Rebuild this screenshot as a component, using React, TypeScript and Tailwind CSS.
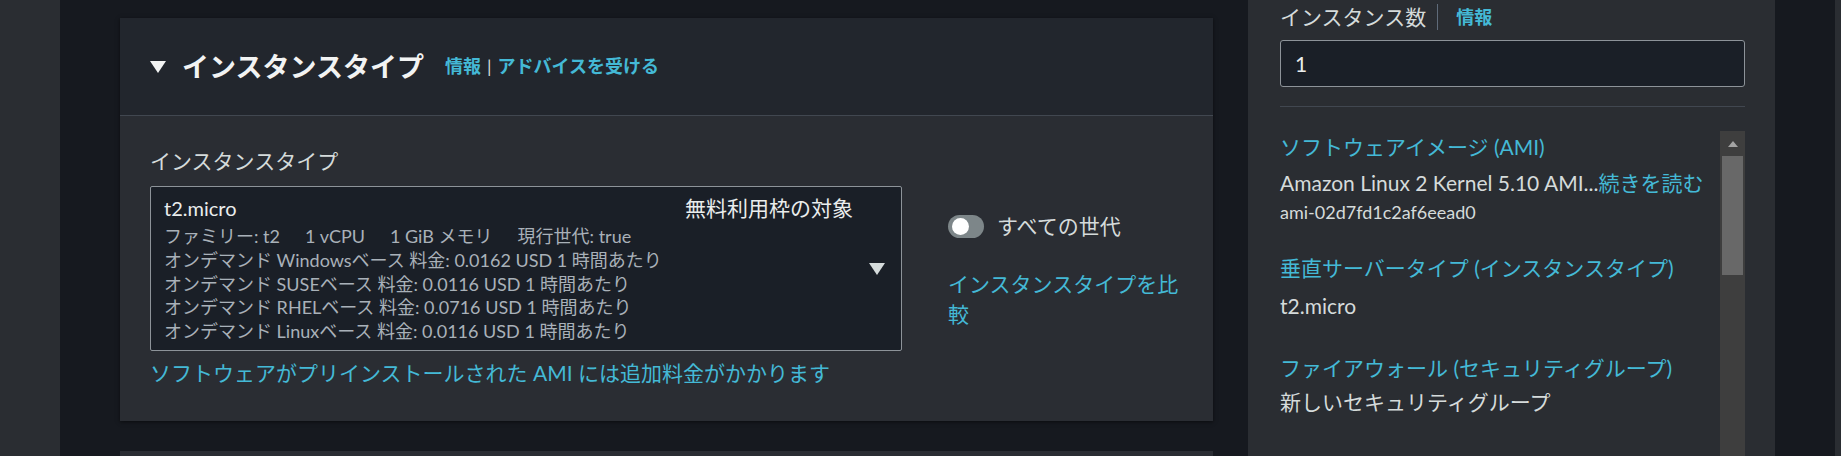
import React from 'react';

const font = "font-['Lato','Noto_Sans_CJK_JP',sans-serif]";

const Caret: React.FC<{ className?: string }> = ({ className }) => (
  <svg viewBox="0 0 16 12" className={className}>
    <polygon points="0,0 16,0 8,12" fill="currentColor" />
  </svg>
);

const specs = ['ファミリー: t2', '1 vCPU', '1 GiB メモリ', '現行世代: true'];

const priceLines = [
  'オンデマンド Windowsベース 料金: 0.0162 USD 1 時間あたり',
  'オンデマンド SUSEベース 料金: 0.0116 USD 1 時間あたり',
  'オンデマンド RHELベース 料金: 0.0716 USD 1 時間あたり',
  'オンデマンド Linuxベース 料金: 0.0116 USD 1 時間あたり',
];

const InstanceTypeCard: React.FC = () => (
  <div className="w-[1093px] bg-[#2a2d33] shadow-[0_1px_4px_rgba(0,0,0,0.55)]">
    <div className="h-[98px] bg-[#22262d] border-b border-[#414750] flex items-center pl-[30px]">
      <Caret className="w-[16px] h-[12px] text-[#f2f3f3]" />
      <h2 className="ml-[16px] text-[27px] leading-[34px] font-bold text-[#f2f3f3]">インスタンスタイプ</h2>
      <div className="ml-[21px] flex items-center text-[18px] font-bold text-[#44b9d6]">
        <span>情報</span>
        <span className="mx-[6px] font-normal text-[#d5dbdb]">|</span>
        <span>アドバイスを受ける</span>
      </div>
    </div>
    <div className="flex px-[30px] pt-[31px] pb-[34px]">
      <div className="w-[752px]">
        <div className="text-[21px] leading-[28px] text-[#d5dbdb]">インスタンスタイプ</div>
        <div className="mt-[11px] h-[165px] bg-[#1a1f27] border border-[#8d9399] rounded-[2px] flex">
          <div className="flex-1 pl-[13px] pt-[7px]">
            <div className="text-[20px] leading-[28px] text-[#eaeded]">t2.micro</div>
            <div className="mt-[3px] text-[18px] leading-[23.75px] text-[#a9b1b9]">
              <div className="flex gap-[25px] whitespace-nowrap">
                {specs.map(s => (
                  <span key={s}>{s}</span>
                ))}
              </div>
              {priceLines.map(line => (
                <div key={line} className="whitespace-nowrap">{line}</div>
              ))}
            </div>
          </div>
          <div className="pt-[7px] text-[21px] leading-[28px] text-[#eaeded]">無料利用枠の対象</div>
          <div className="w-[48px] flex items-center justify-center">
            <Caret className="w-[16px] h-[12px] text-[#d5dbdb]" />
          </div>
        </div>
        <div className="mt-[8px] text-[21px] leading-[28px] text-[#44b9d6]">
          ソフトウェアがプリインストールされた AMI には追加料金がかかります
        </div>
      </div>
      <div className="ml-[46px] flex-1">
        <div className="mt-[65px] flex items-center">
          <div className="w-[36px] h-[23px] rounded-full bg-[#7d8689] flex items-center pl-[4px]">
            <div className="w-[17px] h-[17px] rounded-full bg-white" />
          </div>
          <span className="ml-[13px] text-[21px] leading-[28px] text-[#d5dbdb]">すべての世代</span>
        </div>
        <div className="mt-[29px] text-[21px] leading-[30px] text-[#44b9d6]">インスタンスタイプを比較</div>
      </div>
    </div>
  </div>
);

const SummaryPanel: React.FC = () => (
  <div className="w-[527px] h-full bg-[#2a2d32] pl-[32px] pr-[30px] pt-[3px] flex flex-col">
    <div className="flex items-center">
      <span className="text-[21px] leading-[28px] text-[#d5dbdb]">インスタンス数</span>
      <span className="ml-[11px] w-px h-[26px] bg-[#5f6b7a]" />
      <span className="ml-[18px] text-[18px] font-bold text-[#44b9d6]">情報</span>
    </div>
    <div className="mt-[9px] h-[47px] bg-[#1a1f27] border border-[#8d9399] rounded-[3px] flex items-center px-[14px] text-[21px] text-[#eaeded]">
      1
    </div>
    <div className="mt-[19px] h-px bg-[#414750]" />
    <div className="mt-[24px] flex flex-1 min-h-0">
      <div className="flex-1 text-[21px] leading-[28px]">
        <div className="mt-[2px] text-[#44b9d6]">ソフトウェアイメージ (AMI)</div>
        <div className="mt-[8px] text-[#d5dbdb] whitespace-nowrap">
          Amazon Linux 2 Kernel 5.10 AMI...<span className="text-[#44b9d6]">続きを読む</span>
        </div>
        <div className="mt-[3px] text-[18px] leading-[24px] text-[#d5dbdb]">ami-02d7fd1c2af6eead0</div>
        <div className="mt-[30px] text-[#44b9d6]">垂直サーバータイプ (インスタンスタイプ)</div>
        <div className="mt-[10px] text-[#d5dbdb]">t2.micro</div>
        <div className="mt-[34px] text-[#44b9d6]">ファイアウォール (セキュリティグループ)</div>
        <div className="mt-[6px] text-[#d5dbdb]">新しいセキュリティグループ</div>
      </div>
      <div className="w-[25px] bg-[#3e3e3e] flex flex-col">
        <div className="h-[25px] flex items-center justify-center">
          <svg viewBox="0 0 10 6" className="w-[10px] h-[6px]">
            <polygon points="5,0 10,6 0,6" fill="#a3a3a3" />
          </svg>
        </div>
        <div className="mx-[2px] h-[119px] bg-[#686868]" />
      </div>
    </div>
  </div>
);

const App: React.FC = () => {
  return (
    <div className={`w-[1841px] h-[456px] flex overflow-hidden bg-[#16191f] ${font}`}>
      <div className="w-[60px] h-full bg-[#2a2d32]" />
      <div className="w-[1188px] h-full pl-[60px] pr-[35px] pt-[18px] flex flex-col gap-[30px]">
        <InstanceTypeCard />
        <div className="w-[1093px] h-[40px] bg-[#2a2d33] shrink-0" />
      </div>
      <SummaryPanel />
      <div className="w-[60px] h-full" />
      <div className="w-[6px] h-full bg-[#2a2d32]" />
    </div>
  );
};

export default App;
